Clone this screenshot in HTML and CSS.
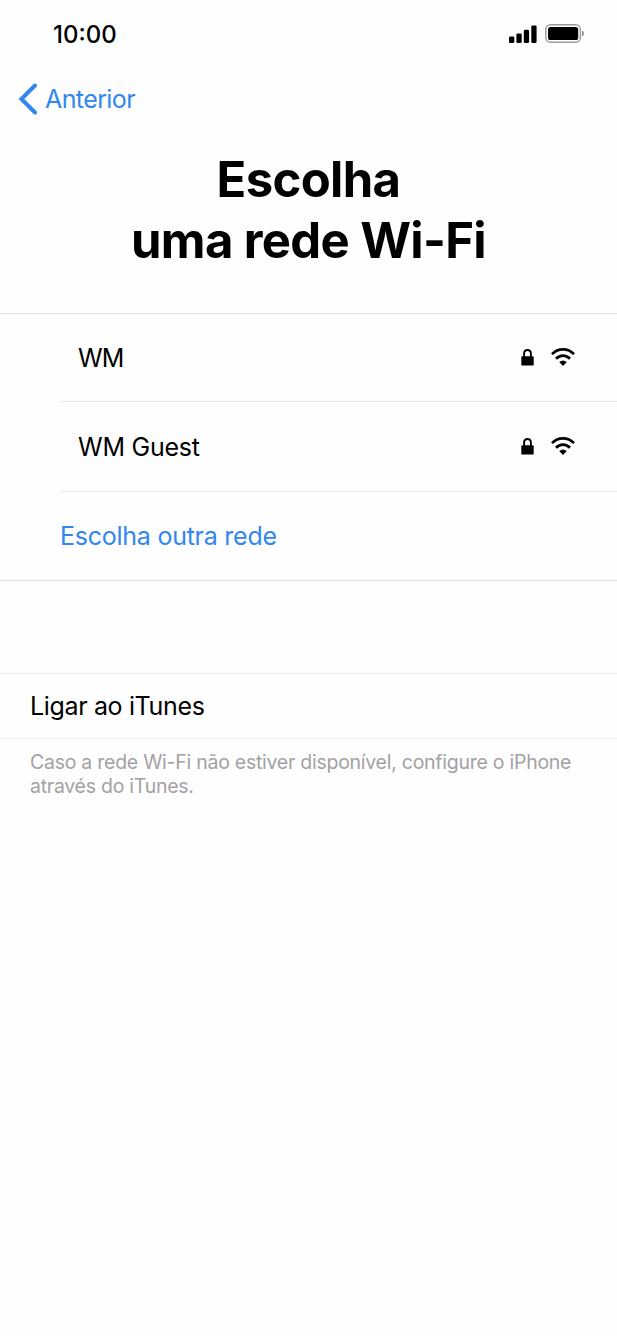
FILE: index.html
```html
<!DOCTYPE html>
<html lang="pt">
<head>
<meta charset="utf-8">
<title>Escolha uma rede Wi-Fi</title>
<link rel="stylesheet" href="styles.css">
</head>
<body>
<svg class="symbols" aria-hidden="true">
  <symbol id="lock" viewBox="0 0 13 17">
    <path d="M3.100 8V4.600C3.100 2.300 4.400 1 6.500 1S9.900 2.300 9.900 4.600V8" fill="none" stroke="#000" stroke-width="1.900"/>
    <rect x="0.300" y="7.200" width="12.400" height="9.400" rx="1.200"/>
  </symbol>
  <symbol id="wifi" viewBox="0 0 24 18">
    <path d="M1 6.100C7.100 -0.200 16.900 -0.200 23 6.100" fill="none" stroke="#000" stroke-width="2.700"/>
    <path d="M5 10.800C9 6.600 15 6.600 19 10.800" fill="none" stroke="#000" stroke-width="2.700"/>
    <path d="M8.200 14.100Q12 10.900 15.800 14.100L12 17.900Z"/>
  </symbol>
</svg>
<header class="status">
  <span class="time">10:00</span>
  <svg class="signal" viewBox="0 0 28 18"><rect x="0" y="11.500" width="5.300" height="6.500" rx="1.300"/><rect x="7.400" y="8.500" width="5.300" height="9.500" rx="1.300"/><rect x="14.800" y="4.700" width="5.300" height="13.300" rx="1.300"/><rect x="22.300" y="0.500" width="5.300" height="17.500" rx="1.300"/></svg>
  <svg class="battery" viewBox="0 0 40 19"><rect x="0.800" y="0.800" width="34.600" height="17.400" rx="4.700" fill="#fff" stroke="#999" stroke-width="1.400"/><rect x="3" y="3" width="30.200" height="13" rx="2.600"/><path d="M37 6.500Q39.200 7.400 39.200 9.500T37 12.500Z" fill="#999"/></svg>
</header>
<nav class="nav">
  <a class="back"><svg class="chevron" viewBox="0 0 20 32"><path d="M17 2.500L3.400 16L17 29.500" fill="none" stroke="#3187ed" stroke-width="4" stroke-linecap="round"/></svg><span class="back-label">Anterior</span></a>
</nav>
<h1 class="title">Escolha<br>uma rede Wi-Fi</h1>
<main>
  <ul class="networks">
    <li class="row first"><span>WM</span><svg class="lock"><use href="#lock"/></svg><svg class="wifi"><use href="#wifi"/></svg></li>
    <li class="row"><span>WM Guest</span><svg class="lock"><use href="#lock"/></svg><svg class="wifi"><use href="#wifi"/></svg></li>
    <li class="row other"><span>Escolha outra rede</span></li>
  </ul>
  <div class="itunes"><span>Ligar ao iTunes</span></div>
  <p class="note">Caso a rede Wi-Fi não estiver disponível, configure o iPhone<br>através do iTunes.</p>
</main>
</body>
</html>
```
FILE: styles.css
```css
* { box-sizing: border-box; }
body {
  margin: 0;
  min-height: 1336px;
  background: #fefefe;
  color: #000;
  font: 425 25px/30px Inter, "Liberation Sans", sans-serif;
}
.symbols { position: absolute; width: 0; height: 0; }
.status { display: flex; align-items: center; height: 67px; padding: 0 32px 0 53px; }
.time { margin-right: auto; padding-top: 2px; font-size: 24px; font-weight: 550; }
.signal { width: 28px; height: 18px; margin-right: 8.500px; }
.battery { width: 40px; height: 19px; }
.nav { display: flex; align-items: center; height: 64px; padding-left: 18px; }
.back { display: flex; align-items: center; color: #3187ed; font-weight: 400; letter-spacing: -0.6px; }
.chevron { width: 20px; height: 32px; margin-right: 7px; }
.title { margin: 18px 0 0; height: 164px; text-align: center; font-size: 49px; line-height: 61px; font-weight: 700; letter-spacing: -0.64px; }
.networks { margin: 0; padding: 0; list-style: none; border-top: 1px solid #e4e4e4; border-bottom: 1px solid #dedede; }
.row { display: flex; align-items: center; height: 90px; margin-left: 60px; padding: 0 42px 0 18px; border-bottom: 1px solid #e9e9e9; letter-spacing: -0.25px; }
.row span { margin-right: auto; }
.first { height: 88px; }
.first span { letter-spacing: -0.8px; }
.lock { width: 13px; height: 17px; margin-right: 17px; }
.wifi { width: 24px; height: 18px; margin-bottom: 2px; }
.other { height: 88px; padding-left: 0; border: 0; color: #3187ed; }
.itunes { display: flex; align-items: center; height: 66px; margin-top: 92px; padding-left: 30px; border-top: 1px solid #ececec; border-bottom: 1px solid #f2f2f2; letter-spacing: -0.35px; }
.note { margin: 11px 0 0; padding-left: 30px; color: #a3a1a4; font-size: 19.500px; font-weight: 400; line-height: 24px; letter-spacing: -0.26px; white-space: nowrap; }
```
